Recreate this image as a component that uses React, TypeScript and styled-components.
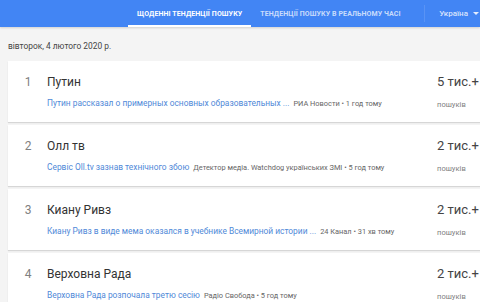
import React from "react";
import styled, { createGlobalStyle } from "styled-components";

const Global = createGlobalStyle`
  html, body { margin: 0; padding: 0; background: #f4f4f4; overflow: hidden; }
  body { font-family: Roboto, "Noto Sans", sans-serif; width: 480px; height: 302px; }
`;

const Page = styled.div`
  width: 480px;
  height: 302px;
  overflow: hidden;
`;

const Header = styled.div`
  height: 27px;
  background: #4285f4;
  display: flex;
  align-items: stretch;
  box-shadow: 0 1px 2px rgba(0,0,0,0.15);
  position: relative;
  z-index: 1;
`;

const Tabs = styled.div`
  display: flex;
  margin-left: 128px;
  align-items: stretch;
`;

const Tab = styled.div<{ $active?: boolean }>`
  display: flex;
  align-items: center;
  padding: 2px 9px 0 9px;
  font-size: 7px;
  font-weight: 700;
  letter-spacing: 0.1px;
  color: ${(p) => (p.$active ? "#fff" : "rgba(255,255,255,0.72)")};
  border-bottom: 2px solid ${(p) => (p.$active ? "#fff" : "transparent")};
  box-sizing: border-box;
  white-space: nowrap;
`;

const Country = styled.div`
  margin-left: auto;
  display: flex;
  align-items: center;
  gap: 5px;
  padding-right: 1px;
  padding-left: 14px;
  color: rgba(255,255,255,0.8);
  font-size: 8px;
  font-weight: 500;
  border-left: 1px solid rgba(255,255,255,0.12);
  margin-top: 5px;
  margin-bottom: 5px;
`;

const Caret = styled.span`
  width: 0;
  height: 0;
  border-left: 3px solid transparent;
  border-right: 3px solid transparent;
  border-top: 3px solid rgba(255,255,255,0.85);
`;

const DateLine = styled.div`
  padding: 14px 0 0 8px;
  height: 20px;
  font-size: 8.4px;
  color: #444;
`;

const List = styled.div`
  margin-left: 8px;
  width: 500px;
  display: flex;
  flex-direction: column;
  gap: 3px;
`;

const Card = styled.div`
  background: #fff;
  height: 61px;
  display: flex;
  align-items: flex-start;
  box-shadow: 0 1px 1px rgba(0,0,0,0.12);
`;

const Num = styled.div`
  width: 38px;
  text-align: center;
  font-size: 12px;
  color: #808080;
  padding-top: 14px;
  padding-left: 1px;
`;

const Main = styled.div`
  width: 390px;
  padding-top: 13px;
`;

const Title = styled.div`
  font-size: 12px;
  color: #333;
  line-height: 16px;
`;

const Sub = styled.div`
  margin-top: 8px;
  font-size: 8.4px;
  white-space: nowrap;
  display: flex;
  align-items: baseline;
  gap: 4px;
`;

const Link = styled.span`
  color: #5089d8;
`;

const Src = styled.span`
  color: #666;
  font-size: 7.4px;
`;

const Right = styled.div`
  padding-top: 12px;
`;

const Count = styled.div`
  font-size: 13px;
  color: #444;
  line-height: 17px;
`;

const CountSub = styled.div`
  margin-top: 10px;
  font-size: 7.6px;
  color: #808080;
`;

const items = [
  { n: 1, t: "Путин", l: "Путин рассказал о примерных основных образовательных ...", s: "РИА Новости • 1 год тому", c: "5 тис.+" },
  { n: 2, t: "Олл тв", l: "Сервіс Oll.tv зазнав технічного збою", s: "Детектор медіа. Watchdog українських ЗМІ • 5 год тому", c: "2 тис.+" },
  { n: 3, t: "Киану Ривз", l: "Киану Ривз в виде мема оказался в учебнике Всемирной истории ...", s: "24 Канал • 31 хв тому", c: "2 тис.+" },
  { n: 4, t: "Верховна Рада", l: "Верховна Рада розпочала третю сесію", s: "Радіо Свобода • 5 год тому", c: "2 тис.+" },
];

export default function App() {
  return (
    <Page>
      <Global />
      <Header>
        <Tabs>
          <Tab $active>ЩОДЕННІ ТЕНДЕНЦІЇ ПОШУКУ</Tab>
          <Tab>ТЕНДЕНЦІЇ ПОШУКУ В РЕАЛЬНОМУ ЧАСІ</Tab>
        </Tabs>
        <Country>
          Україна <Caret />
        </Country>
      </Header>
      <DateLine>вівторок, 4 лютого 2020 р.</DateLine>
      <List>
        {items.map((it) => (
          <Card key={it.n}>
            <Num>{it.n}</Num>
            <Main>
              <Title>{it.t}</Title>
              <Sub>
                <Link>{it.l}</Link>
                <Src>{it.s}</Src>
              </Sub>
            </Main>
            <Right>
              <Count>{it.c}</Count>
              <CountSub>пошуків</CountSub>
            </Right>
          </Card>
        ))}
      </List>
    </Page>
  );
}
